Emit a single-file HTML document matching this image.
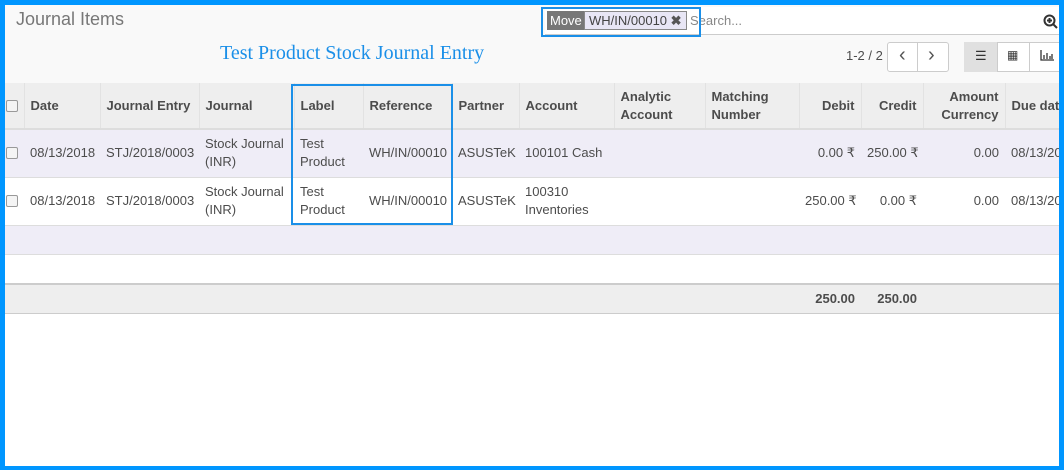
<html><head><style>
body{margin:0;width:1064px;height:470px;overflow:hidden;background:#fff;font-family:"Liberation Sans",sans-serif;font-size:13px;color:#4c4c4c;position:relative}
.a{position:absolute}
.frame{left:0;top:0;width:1064px;height:470px;box-sizing:border-box;border:5px solid #0096ff;border-bottom-width:4px;z-index:10;pointer-events:none}
.hl{border:2px solid #1a8fe8;box-sizing:border-box}
.wrap{position:absolute;left:5px;top:83px;width:1054px;height:240px;overflow:hidden}
table{border-collapse:collapse;table-layout:fixed;width:1100px}
td,th{padding:0 6px;border-bottom:1px solid #ddd;vertical-align:middle;line-height:18px;white-space:nowrap;overflow:hidden;font-size:13px}
th{background:#eee;height:46px;text-align:left;font-weight:bold;border-left:1px solid #e2e2e2;border-bottom:2px solid #ddd}
.r{text-align:right}
.cb{display:inline-block;width:10px;height:10px;border:1px solid #999;border-radius:2px;background:#f4f4f4;vertical-align:middle}
</style></head><body>
<div class="a" style="left:5px;top:5px;width:1054px;height:78px;background:#f9f9f9;border-bottom:1px solid #ccc"></div>
<div class="a" style="left:16px;top:9px;font-size:18px;color:#777">Journal Items</div>
<div class="a" style="left:220px;top:42px;font-size:20px;color:#1a8fe8;font-family:'Liberation Serif',serif">Test Product Stock Journal Entry</div>
<div class="a" style="left:545px;top:7px;width:518px;height:27px;background:#fff;border-bottom:1px solid #ccc"></div>
<div class="a" style="left:547px;top:11px;height:19px;line-height:19px;background:#777;color:#fff;padding:0 3px;font-size:13px">Move</div>
<div class="a" style="left:584px;top:11px;height:17px;line-height:17px;background:#e8e6f5;border:1px solid #888;padding:0 4px;font-size:13px;color:#444">WH/IN/00010 <b style="color:#555">✖</b></div>
<div class="a" style="left:690px;top:13px;color:#888;font-size:13px">Search...</div>
<svg class="a" style="left:1043px;top:14px" width="16" height="16"><circle cx="6.5" cy="6.5" r="5" fill="none" stroke="#333" stroke-width="2"/><path d="M10 10l4 4M4 6.5h5M6.5 4v5" stroke="#333" stroke-width="2"/></svg>
<div class="a hl" style="left:541px;top:7px;width:160px;height:30px"></div>
<div class="a" style="left:846px;top:48px">1-2 / 2</div>
<div class="a" style="left:887px;top:42px;width:60px;height:28px;border:1px solid #ccc;border-radius:3px;background:#fff"></div>
<div class="a" style="left:917px;top:42px;width:1px;height:30px;background:#ccc"></div>
<div class="a" style="left:899px;top:44px;font-size:20px;color:#555">‹</div>
<div class="a" style="left:928px;top:44px;font-size:20px;color:#555">›</div>
<div class="a" style="left:964px;top:42px;width:100px;height:28px;border:1px solid #ccc;border-radius:3px;background:#fff"></div>
<div class="a" style="left:964px;top:42px;width:33px;height:30px;background:#e0e0e0;border-right:1px solid #ccc"></div>
<div class="a" style="left:1029px;top:42px;width:1px;height:30px;background:#ccc"></div>
<div class="a" style="left:975px;top:48px;font-size:13px;color:#333">☰</div>
<div class="a" style="left:1007px;top:48px;font-size:12px;color:#333">▦</div>
<svg class="a" style="left:1040px;top:50px" width="14" height="11"><path d="M1 0v10h13M4 5v4M7 3v6M10 6v3M12 4v5" stroke="#333" stroke-width="1.3" fill="none"/></svg>
<div class="wrap"><table>
<colgroup><col style="width:19px"><col style="width:76px"><col style="width:99px"><col style="width:95px"><col style="width:69px"><col style="width:89px"><col style="width:67px"><col style="width:95px"><col style="width:91px"><col style="width:94px"><col style="width:62px"><col style="width:62px"><col style="width:82px"><col style="width:100px"></colgroup>
<tr><th style="padding:0 1px;border-left:0"><span class="cb"></span></th><th>Date</th><th>Journal Entry</th><th>Journal</th><th>Label</th><th>Reference</th><th>Partner</th><th>Account</th><th>Analytic<br>Account</th><th>Matching<br>Number</th><th class="r">Debit</th><th class="r">Credit</th><th class="r">Amount<br>Currency</th><th>Due date</th></tr>
<tr style="background:#efedf7;height:48px"><td style="padding:0 1px"><span class="cb"></span></td><td>08/13/2018</td><td>STJ/2018/0003</td><td>Stock Journal<br>(INR)</td><td>Test<br>Product</td><td>WH/IN/00010</td><td>ASUSTeK</td><td>100101 Cash</td><td></td><td></td><td class="r">0.00 ₹</td><td class="r">250.00 ₹</td><td class="r">0.00</td><td>08/13/2018</td></tr>
<tr style="height:48px"><td style="padding:0 1px"><span class="cb"></span></td><td>08/13/2018</td><td>STJ/2018/0003</td><td>Stock Journal<br>(INR)</td><td>Test<br>Product</td><td>WH/IN/00010</td><td>ASUSTeK</td><td>100310<br>Inventories</td><td></td><td></td><td class="r">250.00 ₹</td><td class="r">0.00 ₹</td><td class="r">0.00</td><td>08/13/2018</td></tr>
<tr style="background:#efedf7;height:29px"><td colspan="14"></td></tr>
<tr style="height:30px"><td colspan="14" style="border-bottom:2px solid #ccc"></td></tr>
<tr style="background:#eee;height:29px;font-weight:bold"><td colspan="10" style="border-bottom:1px solid #ccc"></td><td class="r" style="border-bottom:1px solid #ccc">250.00</td><td class="r" style="border-bottom:1px solid #ccc">250.00</td><td colspan="2" style="border-bottom:1px solid #ccc"></td></tr>
</table></div>
<div class="a hl" style="left:291px;top:84px;width:162px;height:141px"></div>
<div class="a frame"></div>
</body></html>
